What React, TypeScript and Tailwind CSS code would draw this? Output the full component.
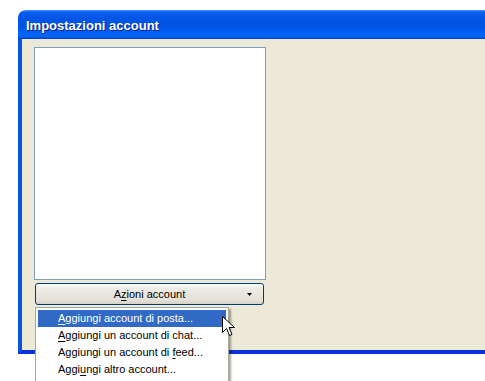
import React from 'react';

const menuItems = [
  { pre: '', u: 'A', post: 'ggiungi account di posta...' },
  { pre: '', u: 'A', post: 'ggiungi un account di chat...' },
  { pre: 'Aggiungi un account di ', u: 'f', post: 'eed...' },
  { pre: 'Aggi', u: 'u', post: 'ngi altro account...' },
];

const Cursor = () => (
  <svg width="13" height="20" viewBox="0 0 13 20" className="absolute left-[222px] top-[316px]">
    <path
      d="M0.5 0.5 L0.5 16.5 L4.5 12.5 L7.5 19.5 L10 18.5 L7 11.5 L12.5 11.5 Z"
      fill="#fff"
      stroke="#000"
      strokeWidth="1"
      strokeLinejoin="miter"
    />
  </svg>
);

const AccountMenu = () => (
  <div className="absolute left-[35px] top-[307px] w-[194px] h-[90px] bg-white border border-[#ACA899] p-[2px] shadow-[2px_2px_2px_rgba(0,0,0,0.35)]">
    {menuItems.map((item, i) => (
      <div
        key={i}
        className={`h-[17px] pl-[20px] text-[11px] leading-[17px] whitespace-pre ${
          i === 0 ? 'bg-[#316AC5] text-white' : 'text-black'
        }`}
      >
        {item.pre}
        <span className="underline underline-offset-2">{item.u}</span>
        {item.post}
      </div>
    ))}
  </div>
);

export default function App() {
  return (
    <div
      className="relative w-[485px] h-[381px] overflow-hidden bg-white"
      style={{ fontFamily: '"Liberation Sans", Arial, sans-serif' }}
    >
      <div className="ml-[18px] mt-[10px] w-[500px] h-[344px] flex flex-col">
        <div className="h-[29px] shrink-0 rounded-tl-[8px] flex items-center pl-[8px] pt-[3px] bg-[linear-gradient(to_bottom,#3D95FF_0%,#0A5EF3_8%,#0055E5_30%,#0054E3_60%,#0064FF_82%,#0062F8_92%,#003DBC_100%)]">
          <span className="text-white font-bold text-[13px] [text-shadow:1px_1px_0_#0A1E8C]">
            Impostazioni account
          </span>
        </div>
        <div className="flex-1 flex flex-col bg-[#ECE9D8] border-l-[4px] border-b-[4px] border-l-[#0855DD] border-b-[#0831D9] pl-[12px] pt-[8px]">
          <div className="w-[232px] h-[233px] bg-white border border-[#7F9DB9]" />
          <div className="mt-[3px] ml-[1px] w-[229px] h-[22px] rounded-[3px] border border-[#003C74] bg-[linear-gradient(to_bottom,#FFFFFF_0%,#ECEBE6_20%,#E3E1D8_80%,#D6D0C5_100%)] flex items-center relative">
            <span className="flex-1 text-center text-[11px] text-black">
              A<span className="underline underline-offset-2">z</span>ioni account
            </span>
            <svg width="5" height="3" viewBox="0 0 5 3" className="absolute right-[11px] top-[9px]">
              <path d="M0 0 H5 L2.5 3 Z" fill="#000" />
            </svg>
          </div>
        </div>
      </div>
      <AccountMenu />
      <Cursor />
    </div>
  );
}
